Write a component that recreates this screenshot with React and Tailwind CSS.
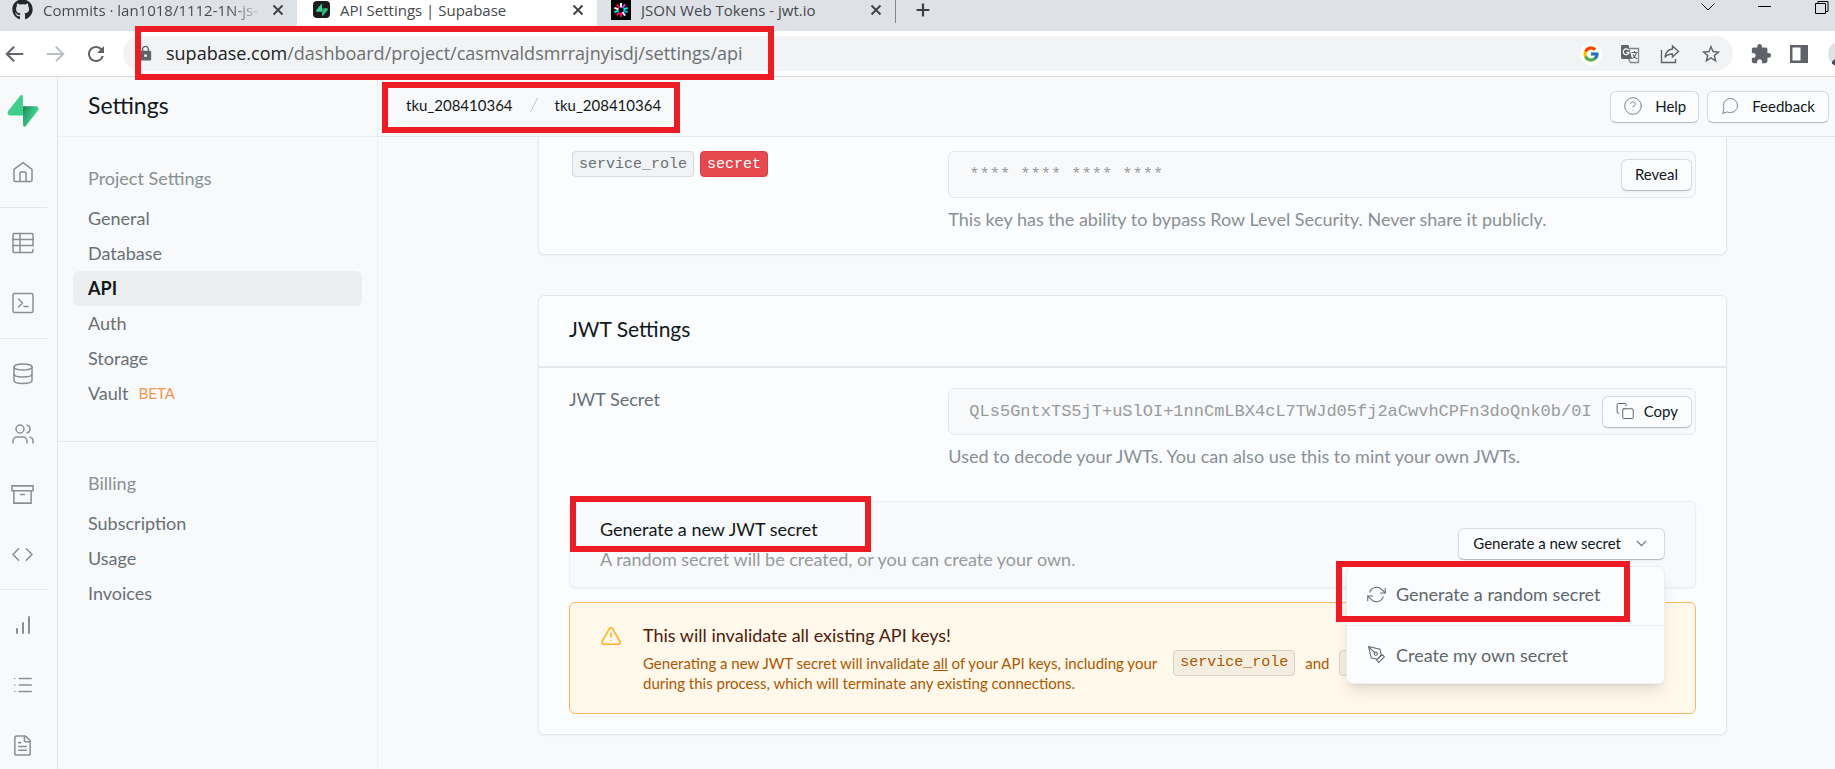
import React from "react";
import { Users, Code, FileText, List, TriangleAlert, CircleHelp, ChevronDown } from "lucide-react";
import { MdLock, MdExtension, MdStarBorder, MdRefresh } from "react-icons/md";
import { FaGithub } from "react-icons/fa";
import { FcGoogle } from "react-icons/fc";

function Stroke({ size = 24, width = 1.5, className = "", children }) {
  return (
    <svg
      width={size}
      height={size}
      viewBox="0 0 24 24"
      fill="none"
      stroke="currentColor"
      strokeWidth={width}
      strokeLinecap="round"
      strokeLinejoin="round"
      className={`shrink-0 ${className}`}
      aria-hidden="true"
    >
      {children}
    </svg>
  );
}

function Bolt({ size }) {
  return (
    <svg width={size} height={size} viewBox="0 0 109 113" fill="none" aria-hidden="true">
      <defs>
        <linearGradient id="boltBase" x1="54" y1="55" x2="94" y2="72" gradientUnits="userSpaceOnUse">
          <stop stopColor="#249361" />
          <stop offset="1" stopColor="#3ECF8E" />
        </linearGradient>
        <linearGradient id="boltShade" x1="36" y1="31" x2="54" y2="65" gradientUnits="userSpaceOnUse">
          <stop />
          <stop offset="1" stopOpacity="0" />
        </linearGradient>
      </defs>
      <path
        d="M63.7 110.28c-2.86 3.6-8.65 1.63-8.72-2.97l-1-67.25h45.21c8.2 0 12.76 9.46 7.67 15.88L63.7 110.28z"
        fill="url(#boltBase)"
      />
      <path
        d="M63.7 110.28c-2.86 3.6-8.65 1.63-8.72-2.97l-1-67.25h45.21c8.2 0 12.76 9.46 7.67 15.88L63.7 110.28z"
        fill="url(#boltShade)"
        fillOpacity="0.2"
      />
      <path
        d="M45.32 2.07c2.86-3.6 8.65-1.63 8.72 2.97l.44 67.25H9.83c-8.19 0-12.76-9.46-7.66-15.87L45.32 2.07z"
        fill="#3ECF8E"
      />
    </svg>
  );
}

function TokenMark() {
  const rays = ["#fff", "#d63aff", "#00f2e6", "#00b9f1", "#fff", "#fb015b", "#fb015b", "#00f2e6", "#fff", "#fb015b"];
  return (
    <svg width="20" height="20" viewBox="0 0 20 20" className="shrink-0" aria-hidden="true">
      <rect width="20" height="20" fill="#000" />
      {rays.map((c, i) => (
        <line
          key={i}
          x1="10"
          y1="7.4"
          x2="10"
          y2="3"
          stroke={c}
          strokeWidth="2"
          transform={`rotate(${i * 36} 10 10)`}
        />
      ))}
    </svg>
  );
}

const closeIcon = (
  <Stroke size={18} width={2.4}>
    <path d="M6 6l12 12M18 6L6 18" strokeLinecap="butt" />
  </Stroke>
);

function Tab({ icon, title, className, titleClass = "" }) {
  return (
    <div className={`flex h-full items-center pb-3 ${className}`}>
      {icon}
      <span className={`ml-2.5 min-w-0 flex-1 overflow-hidden whitespace-nowrap ${titleClass}`}>{title}</span>
      <button type="button" aria-label={`Close ${title}`} className="ml-1.5 text-[#3c4043]">
        {closeIcon}
      </button>
    </div>
  );
}

function TabStrip() {
  return (
    <div className="flex h-[31px] items-center bg-[#dee1e6] font-['Open_Sans',sans-serif] text-[15px] leading-5 text-[#45494d]">
      <Tab
        icon={<FaGithub size={21} className="shrink-0 text-[#24292f]" />}
        title="Commits · lan1018/1112-1N-js-"
        titleClass="bg-linear-to-r from-[#45494d] from-85% to-transparent bg-clip-text text-transparent"
        className="w-[297px] pr-2.5 pl-3"
      />
      <Tab
        icon={
          <span className="flex size-[17px] shrink-0 items-center justify-center rounded-sm bg-[#1c1c1c]">
            <Bolt size={12} />
          </span>
        }
        title="API Settings | Supabase"
        className="w-[300px] bg-white pr-2.5 pl-4"
      />
      <Tab icon={<TokenMark />} title="JSON Web Tokens - jwt.io" className="w-[298px] pr-2.5 pl-3.5" />
      <div className="h-full pb-2">
        <div className="h-full w-px bg-[#85888c]" />
      </div>
      <button type="button" aria-label="New tab" className="ml-4 pb-3 text-[#3c4043]">
        <Stroke size={22} width={2.4}>
          <path d="M12 5v14M5 12h14" strokeLinecap="butt" />
        </Stroke>
      </button>
      <div className="ml-auto flex items-center gap-[43px] pr-1.5 pb-[18px] text-black">
        <button type="button" aria-label="Search tabs">
          <svg width="14" height="8" viewBox="0 0 14 8" fill="none" stroke="currentColor" aria-hidden="true">
            <path d="M.5 .5l6.5 6.500 6.500-6.500" />
          </svg>
        </button>
        <button type="button" aria-label="Minimize">
          <svg width="14" height="8" viewBox="0 0 14 8" stroke="currentColor" aria-hidden="true">
            <path d="M0 3.500h13" />
          </svg>
        </button>
        <button type="button" aria-label="Restore">
          <svg width="14" height="14" viewBox="0 0 14 14" fill="none" stroke="currentColor" aria-hidden="true">
            <path d="M.5 3.500h10v10h-10zM3 3.500V1.500h10v10h-2" />
          </svg>
        </button>
      </div>
    </div>
  );
}

function Mark({ className }) {
  return <div className={`pointer-events-none absolute z-30 border-6 border-[#ed1c24] ${className}`} aria-hidden="true" />;
}

function Toolbar() {
  return (
    <div className="flex h-[46px] items-center border-b border-[#d5d7db] bg-white pl-1 text-[#5f6368]">
      <div className="flex items-center gap-[18px]">
        <button type="button" aria-label="Back" className="w-[22px]">
          <Stroke size={22} width={2.2}>
            <path d="M21 12H4M11 4l-8 8 8 8" strokeLinecap="butt" strokeLinejoin="miter" />
          </Stroke>
        </button>
        <button type="button" aria-label="Forward" className="w-[22px] text-[#bdc1c6]">
          <Stroke size={22} width={2.2}>
            <path d="M3 12h17M13 4l8 8-8 8" strokeLinecap="butt" strokeLinejoin="miter" />
          </Stroke>
        </button>
        <button type="button" aria-label="Reload" className="w-[22px]">
          <MdRefresh size={24} />
        </button>
      </div>
      <div className="relative ml-[17px] flex h-[35px] flex-1 items-center rounded-full bg-[#f1f3f4] pr-[11px] pl-3.5">
        <MdLock size={17} className="shrink-0" />
        <p className="ml-3 flex-1 pb-0.5 font-['Open_Sans',sans-serif] text-[18px] leading-6 text-[#6b6f73]">
          <span className="text-[#202124]">supabase.com</span>/dashboard/project/casmvaldsmrrajnyisdj/settings/api
        </p>
        <div className="flex items-center gap-[18px]">
          <button type="button" aria-label="Google" className="flex size-[22px] items-center justify-center rounded-full bg-white">
            <FcGoogle size={18} />
          </button>
          <button type="button" aria-label="Translate" className="w-[22px]">
            <svg width="20" height="20" viewBox="0 0 20 20" aria-hidden="true">
              <path d="M9.500 4.500h9v14h-8l-2-3.500" fill="none" stroke="#80868b" strokeWidth="1.3" />
              <path d="M2 1h6.500l3.500 14H2.500A1.500 1.500 0 0 1 1 13.500V2.500A1.500 1.500 0 0 1 2 1z" fill="#5f6368" />
              <path d="M8.600 6.200A2.900 2.900 0 1 0 9 8.400H6.300" fill="none" stroke="#fff" strokeWidth="1.3" />
              <path d="M11.500 8.500h6M14.500 7v1.500M16.500 8.500c-.5 3-2 4.500-4 6M13 10.500c.8 2 2 3.200 4 4.500" fill="none" stroke="#5f6368" strokeWidth="1.1" />
            </svg>
          </button>
          <button type="button" aria-label="Share" className="w-[22px]">
            <svg width="20" height="20" viewBox="0 0 20 20" fill="none" stroke="currentColor" strokeWidth="1.4" aria-hidden="true">
              <path d="M1.500 6v12.500h14V15" />
              <path d="M12.500 2l6 5.500-6 5.500V10c-3.500 0-6 1-7.500 3.500C5.500 9 8 5.500 12.500 5z" />
            </svg>
          </button>
          <button type="button" aria-label="Bookmark" className="w-[22px]">
            <MdStarBorder size={22} />
          </button>
        </div>
        <Mark className="-top-2.5 left-3 h-[54px] w-[639px]" />
      </div>
      <div className="flex w-[102px] shrink-0 items-center gap-[17px] overflow-hidden pl-[17px]">
        <button type="button" aria-label="Extensions" className="w-[22px] shrink-0">
          <MdExtension size={22} />
        </button>
        <button type="button" aria-label="Side panel" className="w-[22px] shrink-0">
          <svg width="20" height="20" viewBox="0 0 20 20" aria-hidden="true">
            <path d="M1 1h18v18H1z" fill="#5f6368" />
            <path d="M3.500 3.500h8v13h-8z" fill="#fff" />
          </svg>
        </button>
        <button type="button" aria-label="Profile" className="size-[26px] shrink-0 overflow-hidden rounded-full bg-[#dee1e6]">
          <svg width="26" height="26" viewBox="0 0 26 26" fill="#3f4b63" aria-hidden="true">
            <circle cx="13" cy="9" r="5" />
            <path d="M4 21c2-5 16-5 18 0v5H4z" />
          </svg>
        </button>
      </div>
    </div>
  );
}

const railGroups = [
  [
    {
      label: "Home",
      icon: (
        <Stroke>
          <path d="M3 9.300L12 2.600l9 6.700V20a1.500 1.500 0 0 1-1.500 1.500h-15A1.500 1.500 0 0 1 3 20z" />
          <path d="M9 21.500V12.800q0-.8.8-.8h4.400q.8 0 .8.800v8.700" />
        </Stroke>
      ),
    },
  ],
  [
    {
      label: "Table editor",
      icon: (
        <Stroke>
          <path d="M22 14.500v-11a1 1 0 0 0-1-1H3a1 1 0 0 0-1 1v17a1 1 0 0 0 1 1h17.500a1.500 1.500 0 0 0 1.500-1.500v-1.500" />
          <path d="M9 2.500v19M2 8.500h20M2 14.500h20" />
        </Stroke>
      ),
    },
    {
      label: "SQL editor",
      icon: (
        <Stroke>
          <rect x="2" y="2.500" width="20" height="19" rx="1.500" />
          <path d="M7.500 8l4 4-4 4M13 15.500h4" />
        </Stroke>
      ),
    },
  ],
  [
    {
      label: "Database",
      icon: (
        <Stroke>
          <ellipse cx="12" cy="5" rx="9" ry="3" />
          <path d="M3 5v13.500c0 1.800 4 3 9 3s9-1.200 9-3V5" />
          <path d="M3 12c0 1.800 4 3 9 3s9-1.200 9-3" />
        </Stroke>
      ),
    },
    { label: "Authentication", icon: <Users size={24} strokeWidth={1.5} /> },
    {
      label: "Storage",
      icon: (
        <Stroke size={23} width={1.6}>
          <path d="M21 8v13H3V8M1 3h22v5H1zM10 12h4" strokeLinejoin="miter" />
        </Stroke>
      ),
    },
    { label: "Edge functions", icon: <Code size={23} strokeWidth={1.6} /> },
  ],
  [
    {
      label: "Reports",
      icon: (
        <Stroke width={2}>
          <path d="M6 20v-4M12 20V10M18 20V4" />
        </Stroke>
      ),
    },
    { label: "Logs", icon: <List size={22} strokeWidth={1.7} /> },
    { label: "API docs", icon: <FileText size={23} strokeWidth={1.6} /> },
  ],
];

function Rail() {
  return (
    <nav aria-label="Main" className="w-[58px] shrink-0 border-r border-[#dfe3e6] pr-[10px] text-[#889096]">
      <a href="#home" aria-label="Supabase" className="flex h-[60px] items-center justify-center pt-2 pr-px">
        <Bolt size={32} />
      </a>
      {railGroups.map((group, i) => (
        <div key={i} className={`flex flex-col gap-2.5 pb-2.5 ${i ? "border-t border-[#e6e8eb] pt-2.5" : "pt-[10px]"}`}>
          {group.map((item) => (
            <a key={item.label} href="#section" aria-label={item.label} className="flex h-[50px] items-center justify-center pr-0.5">
              {item.icon}
            </a>
          ))}
        </div>
      ))}
    </nav>
  );
}

function NavItem({ children, active }) {
  return (
    <a
      href="#page"
      aria-current={active ? "page" : undefined}
      className={`flex h-[35px] items-center gap-2.5 rounded-md px-[15px] pb-0.5 ${
        active ? "bg-[#eceef0] font-bold text-[#11181c]" : "text-[#687076]"
      }`}
    >
      {children}
    </a>
  );
}

function Settings() {
  return (
    <aside className="w-[320px] shrink-0 border-r border-[#eceef0] text-[18px] leading-6">
      <h1 className="flex h-[60px] items-center border-b border-[#eceef0] pb-1 pl-[30px] text-[23px] text-[#11181c]">Settings</h1>
      <div className="border-b border-[#e6e8eb] px-[15px] pt-[29px] pb-[30px]">
        <h2 className="mb-[11px] px-[15px] text-[#889096]">Project Settings</h2>
        <NavItem>General</NavItem>
        <NavItem>Database</NavItem>
        <NavItem active>API</NavItem>
        <NavItem>Auth</NavItem>
        <NavItem>Storage</NavItem>
        <NavItem>
          Vault <span className="text-[15px] text-[#fa934e]">BETA</span>
        </NavItem>
      </div>
      <div className="px-[15px] pt-[29px]">
        <h2 className="mb-[11px] px-[15px] text-[#889096]">Billing</h2>
        <NavItem>Subscription</NavItem>
        <NavItem>Usage</NavItem>
        <NavItem>Invoices</NavItem>
      </div>
    </aside>
  );
}

function Button({ children, className = "", ...rest }) {
  return (
    <button
      type="button"
      className={`flex h-8 items-center rounded-md border border-[#d7dbdf] border-b-[#b8bdc1] bg-[#fbfcfd] pb-0.5 text-[15px] leading-5 text-[#11181c] shadow-xs ${className}`}
      {...rest}
    >
      {children}
    </button>
  );
}

function KeyField({ id, label, value, help, action }) {
  return (
    <div className="col-span-8">
      <div className="relative">
        <input
          id={id}
          aria-label={label}
          readOnly
          defaultValue={value}
          className="block h-[47px] w-full rounded-md border border-[#e6e8eb] bg-[#f8f9fa] px-5 font-['Liberation_Mono',monospace] text-[17px] text-[#979b9e]"
        />
        <div className="absolute inset-y-0 right-1 flex items-center">{action}</div>
      </div>
      <p className="mt-[9px] text-[18px] leading-6 text-[#889096]">{help}</p>
    </div>
  );
}

const codeBase = "rounded-sm border font-['Liberation_Mono',monospace] text-[15px]";

function Main() {
  return (
    <main className="min-w-0 flex-1">
      <header className="relative flex h-[60px] items-center border-b border-[#e6e8eb] pr-[6px] pl-7 text-[15px] leading-5 text-[#11181c]">
        <nav aria-label="Breadcrumb" className="flex flex-1 items-center gap-[15px] pb-1">
          <a href="#org">tku_208410364</a>
          <svg width="12" height="16" viewBox="0 0 12 16" stroke="#c1c8cd" aria-hidden="true">
            <path d="M9.500 1l-7 14" />
          </svg>
          <a href="#project">tku_208410364</a>
        </nav>
        <div className="flex gap-2">
          <Button className="gap-3 px-3">
            <CircleHelp size={20} strokeWidth={1.2} className="text-[#7e868c]" />
            Help
          </Button>
          <Button className="gap-3 pr-[13px] pl-3">
            <Stroke size={20} width={1.2} className="text-[#7e868c]">
              <path d="M21 11.500a8.380 8.380 0 0 1-.9 3.800 8.500 8.500 0 0 1-7.600 4.700 8.380 8.380 0 0 1-3.800-.9L3 21l1.900-5.700a8.380 8.380 0 0 1-.9-3.800 8.500 8.500 0 0 1 4.700-7.600 8.380 8.380 0 0 1 3.800-.9h.5a8.480 8.480 0 0 1 8 8v.5z" />
            </Stroke>
            Feedback
          </Button>
        </div>
        <Mark className="top-[5px] left-1 h-[51px] w-[298px]" />
      </header>

      <div className="pr-[108px] pl-[160px]">
        <section className="rounded-b-md border border-t-0 border-[#e6e8eb] bg-[#fbfcfd] px-[30px] pt-3.5 pb-[23px] shadow-xs">
          <div className="grid grid-cols-12 gap-[11px]">
            <div className="col-span-4 flex items-start gap-1.5 pl-[3px]">
              <code className={`${codeBase} border-[#d7dbdf] bg-[#f1f3f5] px-1.5 pt-0.5 leading-[22px] text-[#687076]`}>service_role</code>
              <code className={`${codeBase} border-[#dc3d43] bg-[#e5484d] px-1.5 pt-0.5 leading-[22px] text-white`}>secret</code>
            </div>
            <KeyField
              id="service-key"
              label="service_role key"
              value="**** **** **** ****"
              help="This key has the ability to bypass Row Level Security. Never share it publicly."
              action={<Button className="px-[13px]">Reveal</Button>}
            />
          </div>
        </section>

        <section className="mt-10 rounded-md border border-[#e6e8eb] bg-[#fbfcfd] shadow-xs">
          <h2 className="flex h-[72px] items-center border-b-2 border-[#e6e8eb] px-[30px] pb-1 text-[21px] text-[#11181c]">JWT Settings</h2>
          <div className="px-[30px] pt-5 pb-5">
            <div className="grid grid-cols-12 gap-[11px]">
              <label htmlFor="jwt-secret" className="col-span-4 text-[18px] leading-[22px] text-[#687076]">
                JWT Secret
              </label>
              <KeyField
                id="jwt-secret"
                label="JWT Secret"
                value="QLs5GntxTS5jT+uSlOI+1nnCmLBX4cL7TWJd05fj2aCwvhCPFn3doQnk0b/0I"
                help="Used to decode your JWTs. You can also use this to mint your own JWTs."
                action={
                  <Button className="gap-2.5 px-[13px]">
                    <Stroke size={18} width={1.3} className="text-[#5c6368]">
                      <rect x="9" y="9" width="14" height="13" rx="1.500" />
                      <path d="M4 15H3a1.500 1.500 0 0 1-1.500-1.500V3.500A1.500 1.500 0 0 1 3 2h9a1.500 1.500 0 0 1 1.500 1.500V5" />
                    </Stroke>
                    Copy
                  </Button>
                }
              />
            </div>

            <div className="relative mt-[33px] flex items-center justify-between rounded-md border border-[#eceef0] bg-[#f8f9fa] px-[30px] pt-3 pb-[13px] shadow-xs">
              <div className="text-[18px] leading-[30px]">
                <h3 className="text-[#11181c]">Generate a new JWT secret</h3>
                <p className="text-[#96999c]">A random secret will be created, or you can create your own.</p>
              </div>
              <Mark className="-top-1.5 left-0 h-14 w-[301px]" />
              <div className="relative">
                <Button aria-haspopup="menu" aria-expanded="true" className="gap-3 px-3.5">
                  Generate a new secret
                  <ChevronDown size={17} strokeWidth={1.8} className="text-[#687076]" />
                </Button>
                <div
                  role="menu"
                  className="absolute top-[38px] right-0 z-20 w-[319px] rounded-md border border-[#eceef0] bg-[#fbfcfd] text-[18px] leading-6 text-[#60666b] shadow-lg"
                >
                  <button type="button" role="menuitem" className="flex h-[58px] w-full items-center gap-2.5 px-5 pb-1">
                    <Stroke size={19} width={1.3}>
                      <path d="M23 4v6h-6M1 20v-6h6" />
                      <path d="M3.510 9a9 9 0 0 1 14.850-3.360L23 10M1 14l4.640 4.360A9 9 0 0 0 20.490 15" />
                    </Stroke>
                    Generate a random secret
                  </button>
                  <button type="button" role="menuitem" className="flex h-[58px] w-full items-center gap-2.5 border-t border-[#eceef0] px-5">
                    <Stroke size={19} width={1.3}>
                      <path d="M12 19l7-7 3 3-7 7-3-3z" />
                      <path d="M18 13l-1.500-7.500L2 2l3.500 14.500L13 18l5-5zM2 2l7.586 7.586" />
                      <circle cx="11" cy="11" r="2" />
                    </Stroke>
                    Create my own secret
                  </button>
                  <Mark className="-top-1.5 -left-[11px] h-[61px] w-[294px]" />
                </div>
              </div>
            </div>

            <div className="mt-3.5 flex gap-[21px] rounded-md border border-[#f3ba63] bg-[#fff8eb] px-[30px] py-5">
              <TriangleAlert size={22} strokeWidth={1.7} className="mt-0.5 shrink-0 text-[#ffb224]" />
              <div className="min-w-0 flex-1">
                <h3 className="text-[18px] leading-6 text-[#4e2009]">This will invalidate all existing API keys!</h3>
                <p className="mt-1.5 text-[15px] leading-5 text-[#ad5700]">
                  <span className="flex h-5 items-center whitespace-nowrap">
                    <span>
                      Generating a new JWT secret will invalidate <u>all</u> of your API keys, including your
                    </span>
                    <code className={`${codeBase} mr-2.5 ml-4 border-[#d9d2c4] bg-[#f4eee1] px-1.5 leading-6`}>service_role</code>
                    <span>and</span>
                    <code className={`${codeBase} ml-2.5 h-[26px] w-14 border-[#d9d2c4] bg-[#f4eee1]`} />
                  </span>
                  <span className="block">during this process, which will terminate any existing connections.</span>
                </p>
              </div>
            </div>
          </div>
        </section>
      </div>
    </main>
  );
}

export default function App() {
  return (
    <div className="flex h-screen flex-col overflow-hidden bg-[#f8f9fb] font-[Lato,sans-serif]">
      <TabStrip />
      <Toolbar />
      <div className="flex min-h-0 flex-1">
        <Rail />
        <Settings />
        <Main />
      </div>
    </div>
  );
}
